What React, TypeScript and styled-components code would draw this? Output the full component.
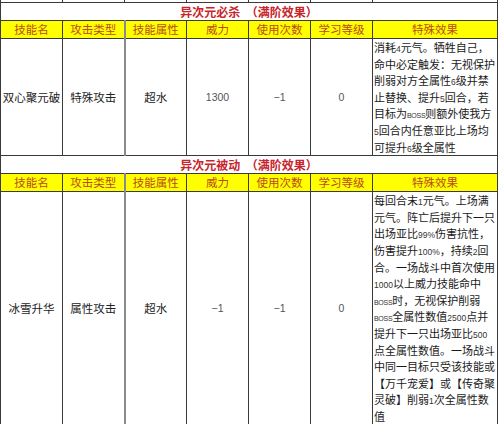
import styled, { createGlobalStyle } from 'styled-components'

const GlobalStyle = createGlobalStyle`
    body {
        margin: 0;
        background: #fff;
        font-family: "Noto Sans CJK SC", "Liberation Sans", sans-serif;
    }
`

const LINE = `1px solid #3a3a3a`

const Table = styled.table`
    width: 497px;
    border-collapse: collapse;
    table-layout: fixed;
    font-size: 11.5px;
    color: #222;
`

const Col = styled.col<{ $w: number }>`
    width: ${(p) => p.$w}px;
`

const StubCell = styled.td`
    height: 2px;
    padding: 0;
    border-left: ${LINE};
    border-right: ${LINE};
    border-bottom: ${LINE};
`

const TitleCell = styled.td`
    height: 16px;
    padding: 1px 0 0 0;
    border: ${LINE};
    text-align: center;
    color: #c8242c;
    font-weight: 700;
    font-size: 12px;
    line-height: 14px;
`

const HeadCell = styled.td<{ $split?: boolean }>`
    height: 17px;
    padding: 0;
    background: #ffff00;
    border: ${LINE};
    border-left: ${(p) => (p.$split ? '2px solid #8a8a8a' : LINE)};
    text-align: center;
    color: #b84a1c;
    font-size: 11.5px;
    line-height: 15px;
`

const DataCell = styled.td<{ $split?: boolean; $num?: boolean }>`
    padding: 0;
    border: ${LINE};
    border-left: ${(p) => (p.$split ? '2px solid #8a8a8a' : LINE)};
    text-align: center;
    vertical-align: middle;
    color: ${(p) => (p.$num ? '#555' : '#222')};
    font-family: ${(p) =>
        p.$num ? '"Liberation Sans", sans-serif' : '"Noto Sans CJK SC", sans-serif'};
    font-size: ${(p) => (p.$num ? '10.5px' : '11.5px')};
`

const EffectCell = styled.td<{ $h: number }>`
    height: ${(p) => p.$h}px;
    padding: 0 0 0 1px;
    border: ${LINE};
    vertical-align: top;
    text-align: left;
    white-space: nowrap;
    font-size: 11px;
    line-height: 16.6px;
    color: #1a1a1a;
`

const EffectLine = styled.div`
    height: 16.6px;
`

const Latin = styled.span<{ $caps?: boolean }>`
    font-family: "Liberation Sans", sans-serif;
    font-size: ${(p) => (p.$caps ? '7px' : '8.5px')};
    letter-spacing: ${(p) => (p.$caps ? '-0.3px' : '0')};
    color: #333;
`

const HEADERS = ['技能名', '攻击类型', '技能属性', '威力', '使用次数', '学习等级', '特殊效果']

type Skill = {
    title: string
    name: string
    kind: string
    attr: string
    power: string
    uses: string
    level: string
    effect: string[]
    height: number
}

const SKILLS: Skill[] = [
    {
        title: '异次元必杀',
        name: '双心聚元破',
        kind: '特殊攻击',
        attr: '超水',
        power: '1300',
        uses: '−1',
        level: '0',
        height: 116,
        effect: [
            '消耗4元气。牺牲自己，',
            '命中必定触发：无视保护',
            '削弱对方全属性6级并禁',
            '止替换、提升5回合，若',
            '目标为BOSS则额外使我方',
            '5回合内任意亚比上场均',
            '可提升6级全属性',
        ],
    },
    {
        title: '异次元被动',
        name: '冰雪升华',
        kind: '属性攻击',
        attr: '超水',
        power: '−1',
        uses: '−1',
        level: '0',
        height: 232,
        effect: [
            '每回合末1元气。上场满',
            '元气。阵亡后提升下一只',
            '出场亚比99%伤害抗性，',
            '伤害提升100%，持续2回',
            '合。一场战斗中首次使用',
            '1000以上威力技能命中',
            'BOSS时，无视保护削弱',
            'BOSS全属性数值2500点并',
            '提升下一只出场亚比500',
            '点全属性数值。一场战斗',
            '中同一目标只受该技能或',
            '【万千宠爱】或【传奇聚',
            '灵破】削弱1次全属性数',
            '值',
        ],
    },
]

// split a line into CJK and ASCII runs so the ASCII can be drawn smaller
const renderLine = (line: string) =>
    line.split(/([\x20-\x7e]+)/).map((part, i) =>
        /^[\x20-\x7e]+$/.test(part) ? (
            <Latin key={i} $caps={/[A-Z]/.test(part)}>
                {part}
            </Latin>
        ) : (
            part
        )
    )

const Section = ({ skill }: { skill: Skill }) => (
    <>
        <tr>
            <TitleCell colSpan={7}>
                {skill.title}&nbsp;&nbsp;（满阶效果）
            </TitleCell>
        </tr>
        <tr>
            {HEADERS.map((h, i) => (
                <HeadCell key={h} $split={i === 2}>
                    {h}
                </HeadCell>
            ))}
        </tr>
        <tr>
            <DataCell>{skill.name}</DataCell>
            <DataCell>{skill.kind}</DataCell>
            <DataCell $split>{skill.attr}</DataCell>
            <DataCell $num>{skill.power}</DataCell>
            <DataCell $num>{skill.uses}</DataCell>
            <DataCell $num>{skill.level}</DataCell>
            <EffectCell $h={skill.height}>
                {skill.effect.map((line, i) => (
                    <EffectLine key={i}>{renderLine(line)}</EffectLine>
                ))}
            </EffectCell>
        </tr>
    </>
)

const App = () => {
    return (
        <>
            <GlobalStyle />
            <Table>
                <colgroup>
                    {[62, 62, 62, 62, 62, 62, 125].map((w, i) => (
                        <Col key={i} $w={w} />
                    ))}
                </colgroup>
                <tbody>
                    <tr>
                        {HEADERS.map((h) => (
                            <StubCell key={h} />
                        ))}
                    </tr>
                    {SKILLS.map((s) => (
                        <Section key={s.title} skill={s} />
                    ))}
                </tbody>
            </Table>
        </>
    )
}

export default App
